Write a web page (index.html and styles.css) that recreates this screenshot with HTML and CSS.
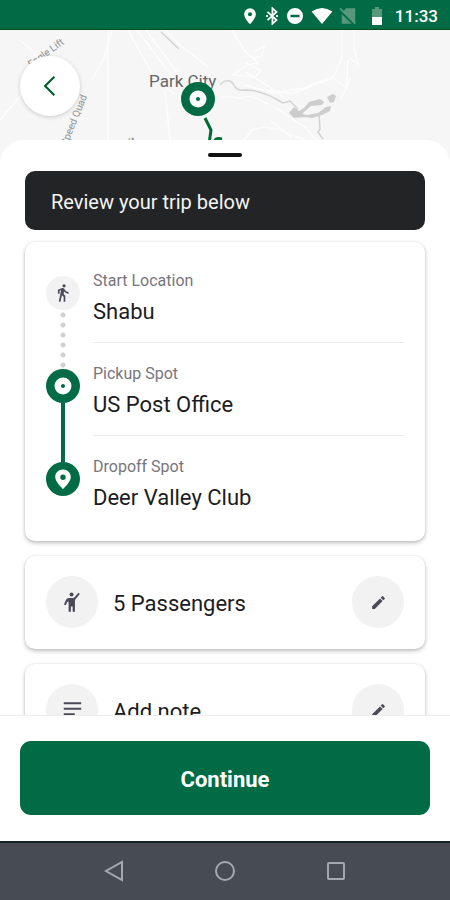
FILE: index.html
```html
<!DOCTYPE html>
<html lang="en">
<head>
<meta charset="utf-8">
<meta name="viewport" content="width=device-width, initial-scale=1">
<title>Review your trip</title>
<link rel="stylesheet" href="styles.css">
</head>
<body>
<div class="screen">
  <header class="status">
    <svg class="status-icon" viewBox="0 0 20 20"><path fill-rule="evenodd" d="M10 1.500a6.500 6.500 0 0 0-6.500 6.500c0 4.800 6.500 11 6.500 11S16.500 12.800 16.500 8A6.500 6.500 0 0 0 10 1.500zm0 4.300a2.300 2.300 0 1 1 0 4.600 2.300 2.300 0 0 1 0-4.600z"/></svg>
    <svg class="status-icon" viewBox="0 0 20 20"><path class="thin" d="M5 5.500l10 9L10.500 18.500V1.500L15 5.500l-10 9M3.500 10h2M14.500 10h2"/></svg>
    <svg class="status-icon middle" viewBox="0 0 20 20"><path fill-rule="evenodd" d="M10 2a8 8 0 1 0 0 16 8 8 0 0 0 0-16zM5.500 8.800h9v2.400h-9z"/></svg>
    <svg class="status-icon wifi" viewBox="0 0 22 20"><path d="M11 18L.6 5.500Q11-1.500 21.400 5.500z"/></svg>
    <svg class="status-icon sim" viewBox="0 0 20 20"><path class="faint" d="M8 1.500h10v17H3V6.500z"/><path class="slash" d="M1 3.500l16 16"/><path class="slash-line" d="M1 1.500l17 17"/></svg>
    <svg class="status-icon battery" viewBox="0 0 20 20"><path class="faint" d="M8 1h4v2h3v8H5V3h3z"/><path d="M5 11h10v8H5z"/></svg>
    <time class="clock">11:33</time>
  </header>

  <div class="map">
    <svg class="map-art" viewBox="0 0 450 130" preserveAspectRatio="xMidYMin slice" role="img" aria-label="Map of Park City">
      <g class="contour">
        <path d="M128 0l25 45 22 20M137 0l38 50M146 0l35 48M165 0l15 15 28 22M92 50l12-22 8-28M108 0v110M165 60l5 50M178 65l12 20M0 90l25-30M20 10l18 16M232 0l12 20 14 13-11 2-14 10 22 2 6-6-15-8M254 22l10-6-2 10-8 2M342 0v28l-8 18-30 12-30 5-30-8M354 0v18l4 16-8-6M270 60l22 4 24-10 18-6 12 10-6 12M246 42l22 14 20 14M270 90l18 14 18 6M276 78l30 20 10 12M222 66l16 2 14-2 16 8M244 110l8-10 12-3 20 3 8 8M348 30l-2 30 4-12M215 66l-10-16M205 95l18 10"/>
      </g>
      <path class="river" d="M161 2l18 17M220 55c4-5 10-6 14 0 2 5 6 6 12 5 14 0 26 6 37 13l7-2 8 8M319 85l1 14-2 3 5 7"/>
      <path class="lake" d="M294 77l5 4 5-3 5-6 11-3 4 3-2 3-11 1-6 5-3 3 5 1 11-2 8-6 5-1-1 5-8 4-10 3-8-1-10 1-5-5zM327 67l6-3 3 2-2 6-4 1z"/>
      <text class="road" transform="translate(31 38) rotate(-36)">Eagle Lift</text>
      <text class="road" transform="translate(67 116) rotate(-68)">Speed Quad</text>
      <text class="road" transform="translate(126 121) rotate(-40)">Lift</text>
      <text class="city" x="149" y="57">Park City</text>
      <path class="route" d="M205 88l6 12-2 14M215 113q-1-6 7-4"/>
      <circle class="green" cx="198" cy="69" r="17"/>
      <circle class="white" cx="198" cy="69" r="8.500"/>
      <circle class="green" cx="198" cy="69" r="2"/>
    </svg>
    <button class="back" type="button" aria-label="Back">
      <svg viewBox="0 0 24 24"><path d="M16 3.500L7.500 12l8.500 8.500"/></svg>
    </button>
  </div>

  <main class="sheet">
    <div class="handle"></div>
    <h1 class="banner">Review your trip below</h1>

    <ol class="card trip">
      <li class="stop">
        <div class="rail">
          <span class="segment lead"></span>
          <svg class="marker" viewBox="0 0 34 34"><circle class="pale" cx="17" cy="17" r="17"/><g transform="translate(7 7) scale(.82)"><path class="ink" d="M13.500 5.500c1.100 0 2-.9 2-2s-.9-2-2-2-2 .9-2 2 .9 2 2 2zM9.800 8.900L7 23h2.100l1.800-8 2.100 2v6h2v-7.500l-2.100-2 .6-3C14.800 12 16.800 13 19 13v-2c-1.900 0-3.500-1-4.300-2.400l-1-1.600c-.4-.6-1-1-1.700-1-.3 0-.5.100-.8.100L6 8.300V13h2V9.600l1.800-.7"/></g></svg>
          <span class="segment dotted"></span>
        </div>
        <div class="place">
          <span class="label">Start Location</span>
          <span class="value">Shabu</span>
        </div>
      </li>
      <li class="stop">
        <div class="rail">
          <span class="segment lead dotted follow"></span>
          <svg class="marker" viewBox="0 0 34 34"><circle class="green" cx="17" cy="17" r="17"/><circle class="white" cx="17" cy="17" r="8.500"/><circle class="green" cx="17" cy="17" r="2"/></svg>
          <span class="segment solid"></span>
        </div>
        <div class="place">
          <span class="label">Pickup Spot</span>
          <span class="value">US Post Office</span>
        </div>
      </li>
      <li class="stop">
        <div class="rail">
          <span class="segment lead solid"></span>
          <svg class="marker" viewBox="0 0 34 34"><circle class="green" cx="17" cy="17" r="17"/><path class="white" fill-rule="evenodd" d="M17 7.500c-4.400 0-7.800 3.300-7.800 7.500 0 5 7.800 12 7.800 12s7.800-7 7.800-12c0-4.200-3.400-7.500-7.800-7.500zm0 5a2.700 2.700 0 1 1 0 5.400 2.700 2.700 0 0 1 0-5.400z"/></svg>
        </div>
        <div class="place">
          <span class="label">Dropoff Spot</span>
          <span class="value">Deer Valley Club</span>
        </div>
      </li>
    </ol>

    <section class="card option">
      <span class="disc"><svg viewBox="0 0 24 24"><circle cx="11.500" cy="3.800" r="2.200"/><path d="M19 1.800l1.500 1.400-5.300 6.500V22.500h-2.500V17h-1.900v5.500H8.300v-11L6.800 12l-1.600 3.600-2-.8 2-4.700Q6 7.500 9 7.500h5z"/></svg></span>
      <h2 class="value">5 Passengers</h2>
      <button class="disc edit" type="button" aria-label="Edit passengers"><svg viewBox="0 0 24 24"><path d="M3 17.200V21h3.800L17.800 9.900 14.100 6.200zM20.700 7a1 1 0 0 0 0-1.400l-2.300-2.300a1 1 0 0 0-1.400 0l-1.900 1.900 3.700 3.700z"/></svg></button>
    </section>

    <section class="card option">
      <span class="disc"><svg viewBox="0 0 24 24"><path d="M3 3.500h19v2.300H3zM3 9.500h19v2.300H3zM3 15.500h12v2.300H3z"/></svg></span>
      <h2 class="value">Add note</h2>
      <button class="disc edit" type="button" aria-label="Edit note"><svg viewBox="0 0 24 24"><path d="M3 17.200V21h3.800L17.800 9.900 14.100 6.200zM20.700 7a1 1 0 0 0 0-1.400l-2.300-2.300a1 1 0 0 0-1.400 0l-1.900 1.900 3.700 3.700z"/></svg></button>
    </section>
  </main>

  <footer class="actions">
    <button class="continue" type="button">Continue</button>
  </footer>

  <nav class="system" aria-label="System">
    <button type="button" aria-label="System back"><svg viewBox="0 0 22 22"><path d="M19 2v18L3 11z"/></svg></button>
    <button type="button" aria-label="Home"><svg viewBox="0 0 22 22"><circle cx="11" cy="11" r="9"/></svg></button>
    <button type="button" aria-label="Recent apps"><svg viewBox="0 0 22 22"><rect x="3" y="3" width="16" height="16" rx="1"/></svg></button>
  </nav>
</div>
</body>
</html>
```

FILE: styles.css
```css
:root {
  --green: #006b45;
  --ink: #4c4a58;
  --pale: #f2f2f2;
}

* {
  box-sizing: border-box;
}

body {
  margin: 0;
  font-family: Roboto, "Liberation Sans", sans-serif;
  color: #1c1c1e;
  background: #fff;
}

button {
  border: 0;
  padding: 0;
  font: inherit;
  cursor: pointer;
}

svg {
  display: block;
}

.screen {
  display: flex;
  flex-direction: column;
  height: 100vh;
  overflow: hidden;
}

/* Status bar */
.status {
  flex: none;
  display: flex;
  align-items: center;
  justify-content: flex-end;
  gap: 4px;
  height: 30px;
  padding: 2px 12px 0 0;
  background: var(--green);
  border-bottom: 1px solid #004d1c;
  color: #fff;
}

.status-icon {
  width: 18px;
  height: 18px;
  fill: #fff;
}

.status-icon.middle {
  width: 20px;
  height: 20px;
}

.status-icon.wifi {
  width: 22px;
  height: 20px;
  margin-left: 2px;
}

.status-icon.sim {
  margin-left: 2px;
}

.status-icon.battery {
  width: 20px;
  height: 20px;
  margin-left: 6px;
}

.thin {
  fill: none;
  stroke: #fff;
  stroke-width: 2;
}

.faint {
  fill: #57987d;
}

.slash {
  stroke: var(--green);
  stroke-width: 3;
}

.slash-line {
  stroke: #57987d;
  stroke-width: 2;
}

.clock {
  margin-left: 4px;
  font-size: 17px;
  font-weight: 500;
  line-height: 24px;
}

/* Map */
.map {
  flex: none;
  position: relative;
  height: 130px;
  background: #f6f6f6;
}

.map-art {
  width: 100%;
  height: 100%;
}

.contour {
  fill: none;
  stroke: #fdfdfd;
  stroke-width: 1.5;
}

.river {
  fill: none;
  stroke: #d3d3d3;
  stroke-width: 1.5;
}

.lake {
  fill: #cdcdcd;
}

.road {
  font-size: 10px;
  fill: #909090;
}

.city {
  font-size: 17px;
  fill: #666;
}

.route {
  fill: none;
  stroke: #006b33;
  stroke-width: 3;
}

.green {
  fill: var(--green);
}

.white {
  fill: #fff;
}

.pale {
  fill: var(--pale);
}

.ink {
  fill: var(--ink);
}

.back {
  position: absolute;
  top: 26px;
  left: 20px;
  display: grid;
  place-items: center;
  width: 60px;
  height: 60px;
  border-radius: 50%;
  background: #fff;
  box-shadow: 0 1px 4px rgba(0, 0, 0, 0.18);
}

.back svg {
  width: 26px;
  height: 26px;
  fill: none;
  stroke: #00602f;
  stroke-width: 2;
}

/* Sheet */
.sheet {
  flex: 1;
  min-height: 0;
  position: relative;
  margin-top: -20px;
  padding: 13px 25px 0;
  overflow: hidden;
  background: #fff;
  border-radius: 24px 24px 0 0;
}

.handle {
  width: 34px;
  height: 4px;
  margin: 0 auto 14px;
  border-radius: 2px;
  background: #111;
}

.banner {
  margin: 0 0 12px;
  padding: 17px 26px 14px;
  border-radius: 10px;
  background: #222425;
  color: #f4f4f4;
  font-size: 20px;
  font-weight: 400;
  line-height: 28px;
}

.card {
  margin: 0 0 15px;
  border-radius: 10px;
  background: #fff;
  box-shadow: 0 2px 4px rgba(0, 0, 0, 0.25), 0 0 2px rgba(0, 0, 0, 0.1);
}

.trip {
  padding: 8px 21px 12px;
  list-style: none;
}

.stop {
  display: flex;
  gap: 13px;
}

.rail {
  flex: none;
  display: flex;
  flex-direction: column;
  align-items: center;
  width: 34px;
}

.marker {
  flex: none;
  width: 34px;
  height: 34px;
}

.segment {
  flex: 1;
  width: 6px;
}

.segment.lead {
  flex: none;
  height: 26px;
}

.dotted {
  background: radial-gradient(circle, #d0d0d0 2px, transparent 3px) 0 0 / 6px 10px;
}

.dotted.follow {
  background-position: 0 -3px;
}

.solid {
  width: 4px;
  background: var(--green);
}

.place {
  flex: 1;
  display: flex;
  flex-direction: column;
  gap: 7px;
  padding: 21px 0 16px;
  border-bottom: 1px solid #ebebeb;
}

.stop:last-child .place {
  border-bottom-color: transparent;
}

.label {
  font-size: 16px;
  line-height: 20px;
  color: #77757d;
}

.value {
  margin: 0;
  font-size: 22px;
  font-weight: 400;
  line-height: 28px;
}

.option {
  display: flex;
  align-items: center;
  gap: 15px;
  padding: 20px 21px 21px;
}

.option .value {
  padding-top: 4px;
}

.disc {
  flex: none;
  display: grid;
  place-items: center;
  width: 52px;
  height: 52px;
  border-radius: 50%;
  background: var(--pale);
}

.disc svg {
  width: 22px;
  height: 22px;
  fill: var(--ink);
}

.edit {
  margin-left: auto;
}

.edit svg {
  width: 17px;
  height: 17px;
}

/* Footer */
.actions {
  flex: none;
  padding: 25px 20px 26px;
  border-top: 1px solid #ededed;
  background: #fff;
}

.continue {
  display: block;
  width: 100%;
  padding: 25px 23px 21px;
  border-radius: 11px;
  background: var(--green);
  color: #fff;
  font-size: 22px;
  font-weight: 700;
  line-height: 28px;
}

.system {
  flex: none;
  display: flex;
  justify-content: center;
  gap: 89px;
  padding: 17px 0 18px;
  border-top: 2px solid #14231f;
  background: #464c52;
}

.system button {
  background: none;
}

.system svg {
  width: 22px;
  height: 22px;
  fill: none;
  stroke: #a3a9ac;
  stroke-width: 2;
}
```
